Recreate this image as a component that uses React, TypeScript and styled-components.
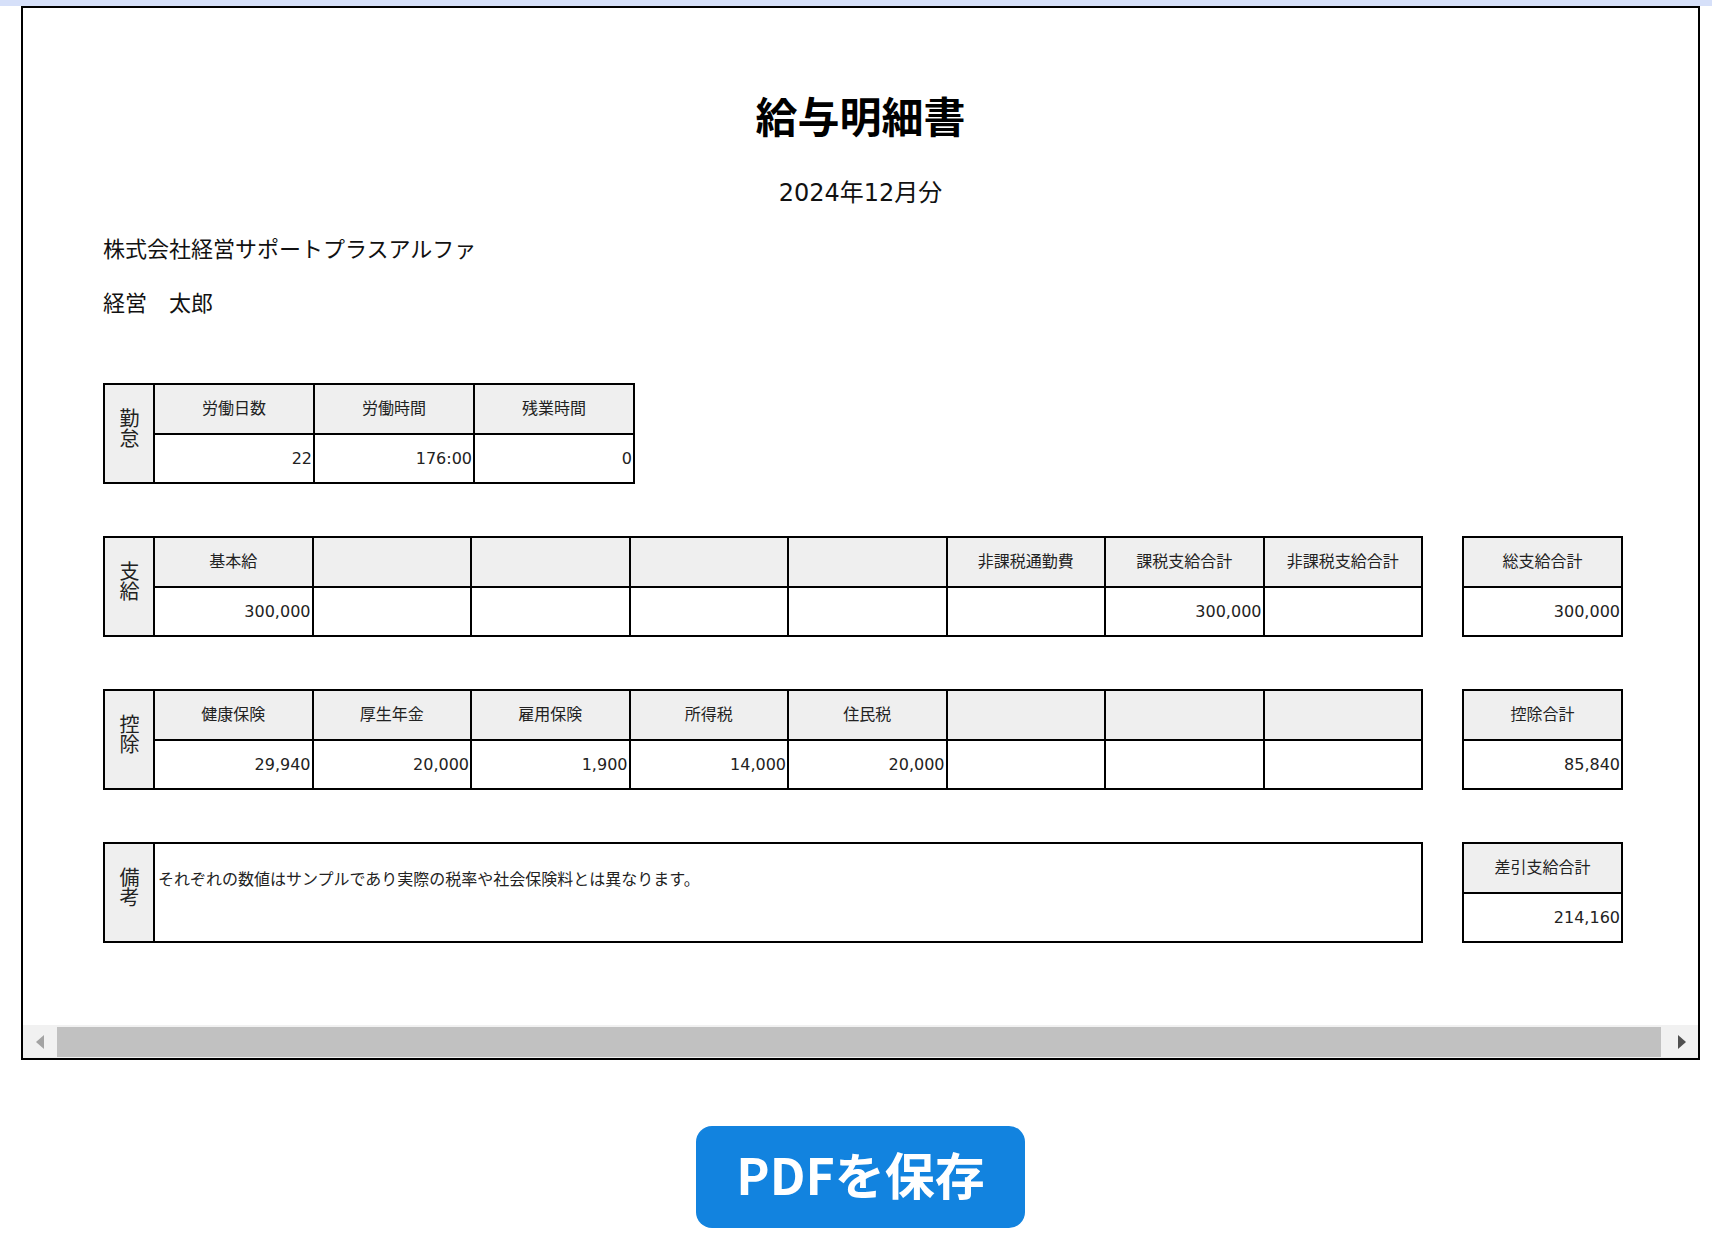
import React from "react";
import styled, { createGlobalStyle } from "styled-components";

const GlobalStyle = createGlobalStyle`
  html, body { margin: 0; padding: 0; background: #ffffff; }
  body {
    font-family: "DejaVu Sans", "Noto Sans CJK JP", sans-serif;
    color: #000;
  }
  * { box-sizing: border-box; }
`;

const Page = styled.div`
  width: 1712px;
  min-height: 1240px;
  display: flex;
  flex-direction: column;
`;

const TopStrip = styled.div`
  height: 6px;
  background: #d6e0f9;
`;

const Frame = styled.div`
  margin-left: 21px;
  width: 1679px;
  height: 1054px;
  border: 2px solid #000;
  display: flex;
  flex-direction: column;
  overflow: hidden;
  background: #fff;
`;

const Sheet = styled.div`
  flex: 1;
  display: flex;
  flex-direction: column;
`;

const Heading = styled.header`
  display: flex;
  flex-direction: column;
  align-items: center;
  padding-top: 83px;
`;

const Title = styled.h1`
  margin: 0;
  font-family: "Noto Sans CJK JP", sans-serif;
  font-size: 42px;
  font-weight: 700;
  line-height: 48px;
  color: #000;
`;

const Period = styled.div`
  margin-top: 38px;
  font-size: 24px;
  line-height: 32px;
  color: #111;
`;

const Party = styled.div`
  padding-left: 80px;
  display: flex;
  flex-direction: column;
`;

const PartyLine = styled.div<{ $gap: number }>`
  margin-top: ${(p) => p.$gap}px;
  font-size: 22px;
  line-height: 30px;
  color: #111;
`;

const Sections = styled.div`
  margin-top: 64px;
  padding-left: 80px;
  display: flex;
  flex-direction: column;
  gap: 52px;
`;

const SectionRow = styled.div`
  display: flex;
  align-items: flex-start;
  gap: 39px;
`;

const SlipGrid = styled.div<{ $cols: number; $colWidth: number; $label?: boolean }>`
  display: grid;
  grid-template-columns: ${(p) => (p.$label ? "48px " : "")}repeat(${(p) => p.$cols}, ${(p) => p.$colWidth}px);
  grid-template-rows: repeat(2, 47.5px);
  gap: 2px;
  padding: 2px;
  background: #000;
  width: max-content;
`;

const LabelCell = styled.div`
  grid-row: span 2;
  background: #efefef;
  display: flex;
  align-items: center;
  justify-content: center;
  padding-bottom: 12px;
`;

const LabelText = styled.span`
  writing-mode: vertical-rl;
  text-orientation: upright;
  font-family: "Noto Sans CJK JP", sans-serif;
  font-size: 20px;
  line-height: 1;
  color: #222;
`;

const HeadCell = styled.div`
  background: #efefef;
  display: flex;
  align-items: center;
  justify-content: center;
  padding-bottom: 4px;
  font-family: "Noto Sans CJK JP", sans-serif;
  font-size: 16px;
  color: #222;
  white-space: nowrap;
`;

const ValueCell = styled.div`
  background: #fff;
  display: flex;
  align-items: center;
  justify-content: flex-end;
  padding-right: 1px;
  font-size: 16px;
  color: #222;
  white-space: nowrap;
`;

const RemarkCell = styled.div<{ $span: number }>`
  grid-column: span ${(p) => p.$span};
  grid-row: span 2;
  background: #fff;
  padding: 22px 0 0 3px;
  font-family: "Noto Sans CJK JP", sans-serif;
  font-size: 16px;
  line-height: 24px;
  color: #222;
`;

const HScrollbar = styled.div`
  height: 33px;
  display: flex;
  background: #f1f1f1;
`;

const ScrollButton = styled.div<{ $w: number; $shift?: number }>`
  width: ${(p) => p.$w}px;
  display: flex;
  align-items: center;
  justify-content: center;
  padding-left: ${(p) => p.$shift ?? 0}px;
`;

const Arrow = styled.span<{ $dir: "left" | "right"; $muted?: boolean }>`
  width: 0;
  height: 0;
  border-top: 7px solid transparent;
  border-bottom: 7px solid transparent;
  ${(p) =>
    p.$dir === "left"
      ? `border-right: 8px solid ${p.$muted ? "#a3a3a3" : "#505050"};`
      : `border-left: 8px solid ${p.$muted ? "#a3a3a3" : "#505050"};`}
`;

const ScrollTrack = styled.div`
  flex: 1;
  display: flex;
  padding: 2px 0 1px;
`;

const ScrollThumb = styled.div`
  flex: 1;
  background: #c1c1c1;
`;

const ButtonRow = styled.div`
  margin-left: 21px;
  width: 1679px;
  margin-top: 66px;
  display: flex;
  justify-content: center;
`;

const SaveButton = styled.button`
  width: 329px;
  height: 102px;
  border: none;
  border-radius: 16px;
  background: #1283df;
  color: #fff;
  font-family: "Noto Sans CJK JP", sans-serif;
  font-size: 50px;
  font-weight: 700;
  cursor: pointer;
  padding: 0 0 8px;
`;

type Item = { head: string; value: string };

const Label = ({ text }: { text: string }) => (
  <LabelCell>
    <LabelText>{text}</LabelText>
  </LabelCell>
);

const ItemGrid = ({ label, items, colWidth }: { label?: string; items: Item[]; colWidth: number }) => (
  <SlipGrid $cols={items.length} $colWidth={colWidth} $label={!!label}>
    {label && <Label text={label} />}
    {items.map((it, i) => (
      <HeadCell key={`h${i}`}>{it.head}</HeadCell>
    ))}
    {items.map((it, i) => (
      <ValueCell key={`v${i}`}>{it.value}</ValueCell>
    ))}
  </SlipGrid>
);

const attendance: Item[] = [
  { head: "労働日数", value: "22" },
  { head: "労働時間", value: "176:00" },
  { head: "残業時間", value: "0" },
];

const payments: Item[] = [
  { head: "基本給", value: "300,000" },
  { head: "", value: "" },
  { head: "", value: "" },
  { head: "", value: "" },
  { head: "", value: "" },
  { head: "非課税通勤費", value: "" },
  { head: "課税支給合計", value: "300,000" },
  { head: "非課税支給合計", value: "" },
];

const deductions: Item[] = [
  { head: "健康保険", value: "29,940" },
  { head: "厚生年金", value: "20,000" },
  { head: "雇用保険", value: "1,900" },
  { head: "所得税", value: "14,000" },
  { head: "住民税", value: "20,000" },
  { head: "", value: "" },
  { head: "", value: "" },
  { head: "", value: "" },
];

export default function App() {
  return (
    <Page>
      <GlobalStyle />
      <TopStrip />
      <Frame>
        <Sheet>
          <Heading>
            <Title>給与明細書</Title>
            <Period>2024年12月分</Period>
          </Heading>
          <Party>
            <PartyLine $gap={26}>株式会社経営サポートプラスアルファ</PartyLine>
            <PartyLine $gap={24}>経営　太郎</PartyLine>
          </Party>
          <Sections>
            <SectionRow>
              <ItemGrid label="勤怠" items={attendance} colWidth={158} />
            </SectionRow>
            <SectionRow>
              <ItemGrid label="支給" items={payments} colWidth={156.5} />
              <ItemGrid items={[{ head: "総支給合計", value: "300,000" }]} colWidth={157} />
            </SectionRow>
            <SectionRow>
              <ItemGrid label="控除" items={deductions} colWidth={156.5} />
              <ItemGrid items={[{ head: "控除合計", value: "85,840" }]} colWidth={157} />
            </SectionRow>
            <SectionRow>
              <SlipGrid $cols={8} $colWidth={156.5} $label>
                <Label text="備考" />
                <RemarkCell $span={8}>
                  それぞれの数値はサンプルであり実際の税率や社会保険料とは異なります。
                </RemarkCell>
              </SlipGrid>
              <ItemGrid items={[{ head: "差引支給合計", value: "214,160" }]} colWidth={157} />
            </SectionRow>
          </Sections>
        </Sheet>
        <HScrollbar>
          <ScrollButton $w={34}>
            <Arrow $dir="left" $muted />
          </ScrollButton>
          <ScrollTrack>
            <ScrollThumb />
          </ScrollTrack>
          <ScrollButton $w={37} $shift={4}>
            <Arrow $dir="right" />
          </ScrollButton>
        </HScrollbar>
      </Frame>
      <ButtonRow>
        <SaveButton>PDFを保存</SaveButton>
      </ButtonRow>
    </Page>
  );
}
